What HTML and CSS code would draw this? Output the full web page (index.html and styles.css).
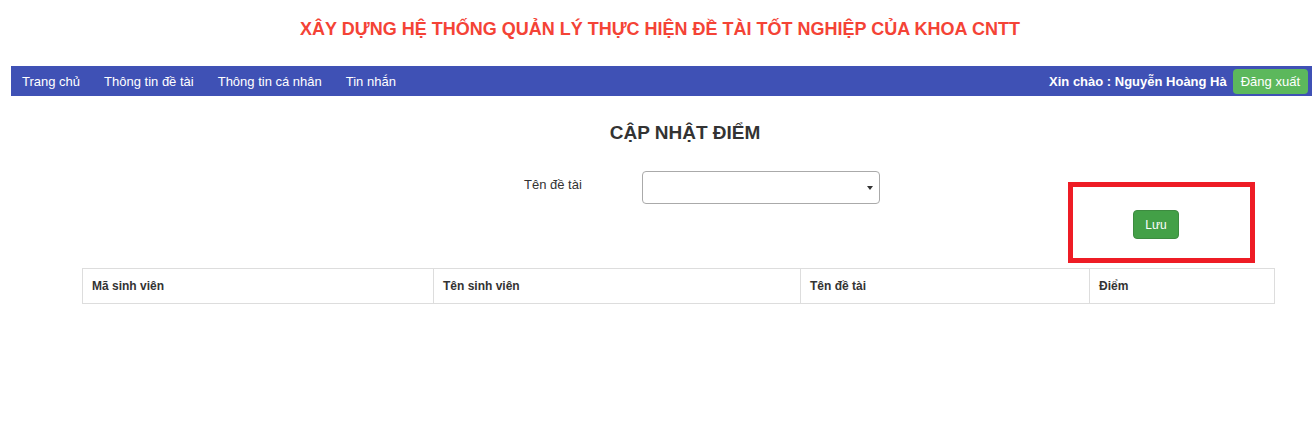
FILE: index.html
```html
<!DOCTYPE html>
<html lang="vi">
<head>
<meta charset="utf-8">
<title>Cập nhật điểm</title>
<link rel="stylesheet" href="styles.css">
</head>
<body>
<header class="site-title">XÂY DỰNG HỆ THỐNG QUẢN LÝ THỰC HIỆN ĐỀ TÀI TỐT NGHIỆP CỦA KHOA CNTT</header>
<nav class="navbar">
  <div class="nav-links">
    <a href="#">Trang chủ</a>
    <a href="#">Thông tin đề tài</a>
    <a href="#">Thông tin cá nhân</a>
    <a href="#">Tin nhắn</a>
  </div>
  <div class="nav-user">
    <span class="greeting">Xin chào : Nguyễn Hoàng Hà</span>
    <button class="btn-logout">Đăng xuất</button>
  </div>
</nav>
<main class="content">
  <h2 class="page-title">CẬP NHẬT ĐIỂM</h2>
  <div class="form-row">
    <label class="form-label">Tên đề tài</label>
    <div class="select-box"><span class="caret"></span></div>
  </div>
  <div class="save-row">
    <button class="btn-save">Lưu</button>
    <div class="highlight"></div>
  </div>
  <table class="grade-table">
    <thead>
      <tr>
        <th class="c1">Mã sinh viên</th>
        <th class="c2">Tên sinh viên</th>
        <th class="c3">Tên đề tài</th>
        <th class="c4">Điểm</th>
      </tr>
    </thead>
  </table>
</main>
</body>
</html>
```
FILE: styles.css
```css
html, body {
  margin: 0;
  padding: 0;
  background: #fff;
  font-family: "Liberation Sans", Arial, sans-serif;
  color: #333;
}
.site-title {
  text-align: center;
  color: #f44336;
  font-weight: bold;
  font-size: 18px;
  line-height: 20px;
  padding-top: 19px;
  height: 47px;
  box-sizing: border-box;
  padding-left: 8px;
}
.navbar {
  margin-top: 19px;
  margin-left: 11px;
  height: 30px;
  background: #3f51b5;
  display: flex;
  align-items: center;
  justify-content: space-between;
}
.nav-links {
  display: flex;
  padding-left: 11px;
  gap: 24px;
}
.nav-links a {
  color: #fff;
  text-decoration: none;
  font-size: 13px;
}
.nav-user {
  display: flex;
  align-items: center;
  gap: 6px;
  padding-right: 4px;
}
.greeting {
  color: #fff;
  font-weight: bold;
  font-size: 13px;
}
.btn-logout {
  background: #5cb85c;
  color: #fff;
  border: none;
  border-radius: 4px;
  font-family: inherit;
  font-size: 13px;
  height: 25px;
  padding: 0 8px;
}
.content {
  position: relative;
}
.page-title {
  margin: 0;
  padding-top: 26px;
  text-align: center;
  font-size: 19px;
  line-height: 22px;
  font-weight: bold;
  color: #333;
  padding-left: 58px;
}
.form-row {
  display: flex;
  margin-top: 27px;
  padding-left: 524px;
}
.form-label {
  width: 118px;
  font-size: 13px;
  padding-top: 6px;
  color: #333;
}
.select-box {
  width: 236px;
  height: 31px;
  border: 1px solid #aaa;
  border-radius: 4px;
  position: relative;
}
.caret {
  position: absolute;
  right: 6px;
  top: 14px;
  width: 0;
  height: 0;
  border-left: 3px solid transparent;
  border-right: 3px solid transparent;
  border-top: 4px solid #333;
}
.save-row {
  position: relative;
  height: 64px;
  padding-left: 1133px;
  padding-top: 6px;
  box-sizing: border-box;
}
.btn-save {
  background: #43a047;
  color: #fff;
  border: 1px solid #3d8b40;
  border-radius: 4px;
  width: 46px;
  height: 29px;
  font-family: inherit;
  font-size: 12px;
  padding: 0;
}
.highlight {
  position: absolute;
  left: 1068px;
  top: -22px;
  width: 187px;
  height: 81px;
  border: 5px solid #ee1c25;
  box-sizing: border-box;
}
.grade-table {
  margin-left: 82px;
  width: 1192px;
  border-collapse: collapse;
  table-layout: fixed;
}
.grade-table th {
  border: 1px solid #ddd;
  text-align: left;
  font-size: 12px;
  font-weight: bold;
  color: #333;
  height: 35px;
  padding: 0 9px;
  box-sizing: border-box;
}
.c1 { width: 351px; }
.c2 { width: 367px; }
.c3 { width: 289px; }
.c4 { width: 185px; }
```
